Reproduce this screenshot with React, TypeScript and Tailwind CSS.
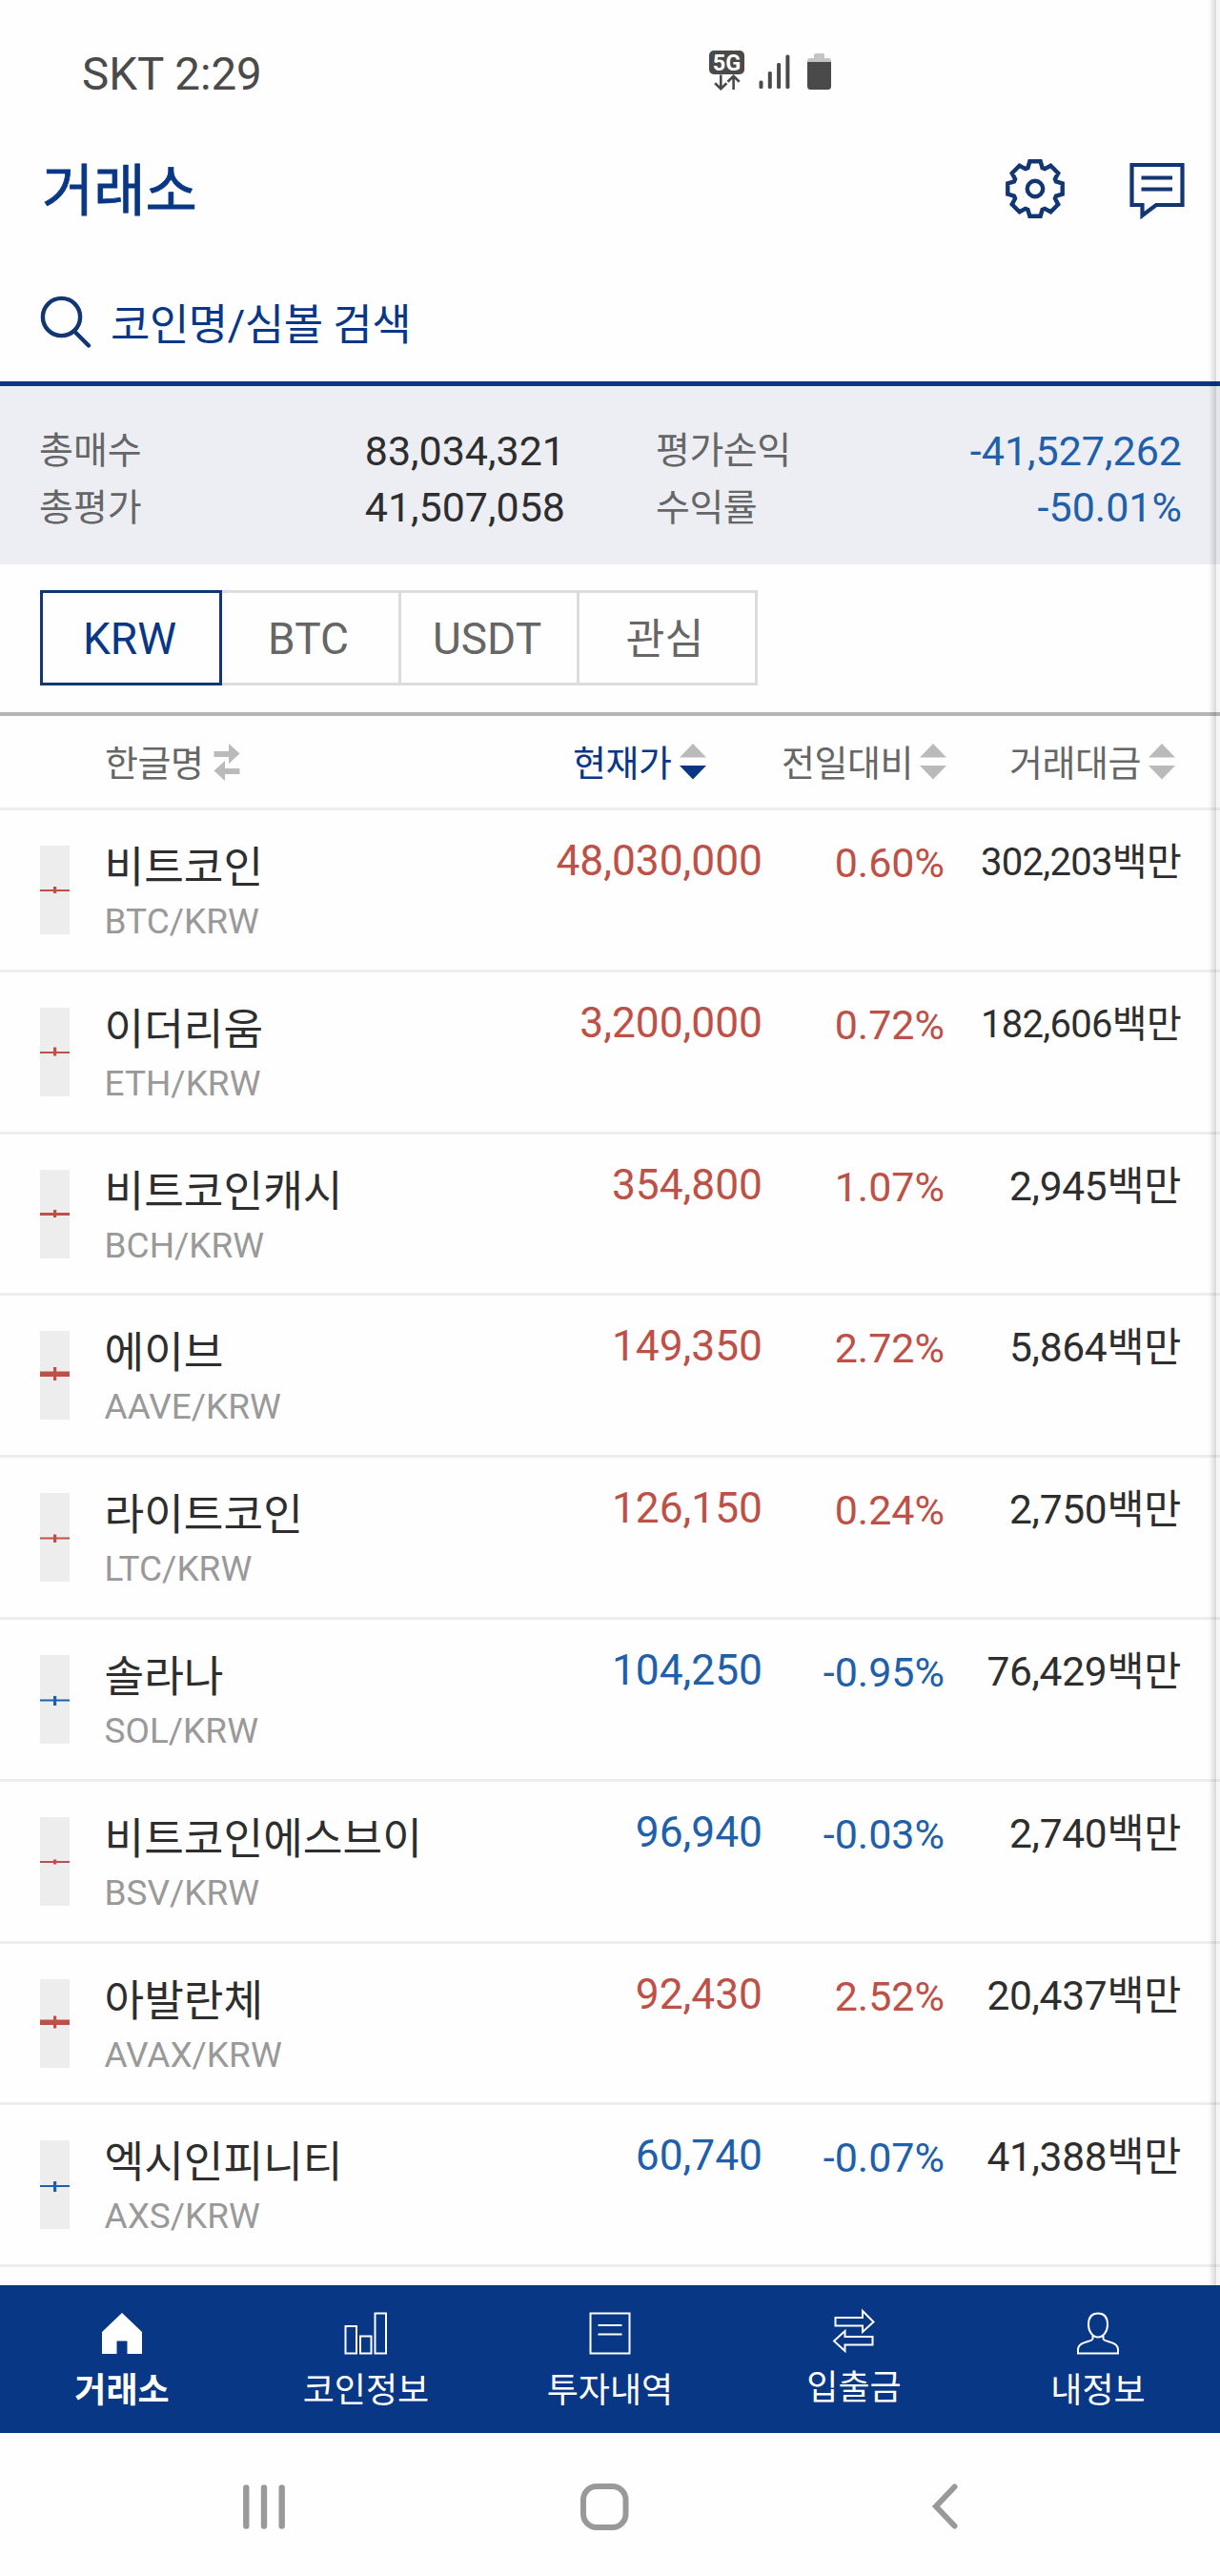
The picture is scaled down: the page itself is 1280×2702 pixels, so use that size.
import type { ReactNode } from "react";

type Coin = {
  name: string;
  pair: string;
  price: string;
  change: string;
  volume: string;
  down?: boolean;
  candle: { color: string; body: [number, number]; wick: [number, number] };
};

const RED = "#bd5148";
const BLUE = "#1f5fa8";

const coins: Coin[] = [
  { name: "비트코인", pair: "BTC/KRW", price: "48,030,000", change: "0.60%", volume: "302,203", candle: { color: RED, body: [46, 48], wick: [43, 50] } },
  { name: "이더리움", pair: "ETH/KRW", price: "3,200,000", change: "0.72%", volume: "182,606", candle: { color: RED, body: [46, 48], wick: [41.5, 50.5] } },
  { name: "비트코인캐시", pair: "BCH/KRW", price: "354,800", change: "1.07%", volume: "2,945", candle: { color: RED, body: [45, 48], wick: [42, 50] } },
  { name: "에이브", pair: "AAVE/KRW", price: "149,350", change: "2.72%", volume: "5,864", candle: { color: RED, body: [42.5, 48], wick: [38, 52] } },
  { name: "라이트코인", pair: "LTC/KRW", price: "126,150", change: "0.24%", volume: "2,750", candle: { color: RED, body: [46.5, 48.5], wick: [43.5, 52] } },
  { name: "솔라나", pair: "SOL/KRW", price: "104,250", change: "-0.95%", volume: "76,429", down: true, candle: { color: BLUE, body: [46.5, 48.5], wick: [43, 53] } },
  { name: "비트코인에스브이", pair: "BSV/KRW", price: "96,940", change: "-0.03%", volume: "2,740", down: true, candle: { color: RED, body: [46, 48], wick: [44.5, 49.5] } },
  { name: "아발란체", pair: "AVAX/KRW", price: "92,430", change: "2.52%", volume: "20,437", candle: { color: RED, body: [42.5, 48], wick: [38.5, 51.5] } },
  { name: "엑시인피니티", pair: "AXS/KRW", price: "60,740", change: "-0.07%", volume: "41,388", down: true, candle: { color: BLUE, body: [47, 49], wick: [43, 54] } },
];

function Candle({ color, body, wick }: Coin["candle"]) {
  return (
    <svg className="block h-[93px] w-[31px] bg-[#ededed]" viewBox="0 0 31 93">
      <rect x="0" y={body[0]} width="31" height={body[1] - body[0]} fill={color} />
      <rect x="14" y={wick[0]} width="3.2" height={wick[1] - wick[0]} fill={color} />
    </svg>
  );
}

function SortArrows({ active = false }: { active?: boolean }) {
  return (
    <svg className="block h-[38px] w-7 shrink-0" viewBox="0 0 28 38">
      <path d="M14 0 28 14.5H0Z" fill="#bababa" />
      <path d="M14 37.5 28 23H0Z" fill={active ? "#083786" : "#bababa"} />
    </svg>
  );
}

function StatusBar() {
  return (
    <header className="flex h-[148px] shrink-0 items-start pl-[86px]">
      <span className="mt-[48px] w-[658px] text-[47.5px] leading-[60px] text-[#4a4a4a]">SKT 2:29</span>
      <div className="mt-[53px] flex w-[37px] flex-col items-center text-[#4a4a4a]">
        <span className="flex h-[25px] w-full items-center justify-center rounded-[5px] bg-[#4a4a4a] pt-[2px] text-[23.5px] leading-none font-bold text-white">
          5G
        </span>
        <svg className="block h-[17px] w-[28px]" viewBox="0 0 28 17" fill="none" stroke="currentColor" strokeWidth="2.6">
          <path d="M7.3 0.5V15M1.2 9.2l6.1 6 6.1-6M20.6 16V2M14.5 7.8l6.1-6 6.1 6" />
        </svg>
      </div>
      <svg className="mt-[57px] ml-[15px] block h-[37px] w-[33px]" viewBox="0 0 33 37" fill="#4a4a4a">
        <rect x="0.5" y="27.5" width="4" height="8.5" rx="1.6" />
        <rect x="9.8" y="18" width="4" height="18" rx="1.6" />
        <rect x="19.1" y="9" width="4" height="27" rx="1.6" />
        <rect x="28.4" y="0.5" width="4" height="35.5" rx="1.6" />
      </svg>
      <svg className="mt-[56px] ml-[18px] block h-[38px] w-[25px]" viewBox="0 0 25 38">
        <path d="M7 2a2 2 0 0 1 2-2h7a2 2 0 0 1 2 2v3h4a3 3 0 0 1 3 3v2H0V8a3 3 0 0 1 3-3h4Z" fill="#c3c3c3" />
        <path d="M0 9h25v25.5a3.5 3.5 0 0 1-3.5 3.5h-18A3.5 3.5 0 0 1 0 34.5Z" fill="#4a4a4a" />
      </svg>
    </header>
  );
}

function GearIcon() {
  const tooth = [
    [-7.6, -22],
    [-5.6, -28.7],
    [5.6, -28.7],
    [7.6, -22],
  ];
  const points: string[] = [];
  for (let i = 0; i < 8; i++) {
    const a = (i * Math.PI) / 4;
    for (const [x, y] of tooth) {
      points.push(`${(x * Math.cos(a) - y * Math.sin(a)).toFixed(2)},${(x * Math.sin(a) + y * Math.cos(a)).toFixed(2)}`);
    }
  }
  return (
    <svg className="block h-[62px] w-[62px]" viewBox="-31 -31 62 62" fill="none" stroke="#123672" strokeWidth="4.4">
      <polygon points={points.join(" ")} />
      <circle r="8.2" />
    </svg>
  );
}

function ChatIcon() {
  return (
    <svg className="block h-[60px] w-[58px]" viewBox="0 0 58 60" fill="none" stroke="#123672" strokeWidth="4.2">
      <path d="M2.5 2H55.500V44H28L13.500 55V44H2.5Z" />
      <path d="M12.500 15.500H45M12.500 27.500H45" />
    </svg>
  );
}

function Summary() {
  const left = [["총매수", "83,034,321"], ["총평가", "41,507,058"]];
  const right = [["평가손익", "-41,527,262"], ["수익률", "-50.01%"]];
  return (
    <section className="flex h-[192px] shrink-0 border-t-[5px] border-[#083786] bg-[#eceef4] pt-[38px] pr-[40px] pl-[41px]">
      <dl className="w-[552px]">
        {left.map(([label, value]) => (
          <div key={label} className="flex h-[59.5px] items-center justify-between">
            <dt className="pt-[2px] text-[39px] leading-[59px] text-[#666]">{label}</dt>
            <dd className="pt-px text-[43px] leading-[59px] text-[#2e2e2e]">{value}</dd>
          </div>
        ))}
      </dl>
      <dl className="ml-[95px] flex-1">
        {right.map(([label, value]) => (
          <div key={label} className="flex h-[59.5px] items-center justify-between">
            <dt className="pt-[2px] text-[39px] leading-[59px] tracking-[-0.5px] text-[#666]">{label}</dt>
            <dd className="pt-px text-[43px] leading-[59px] text-[#2060ab]">{value}</dd>
          </div>
        ))}
      </dl>
    </section>
  );
}

function MarketTabs() {
  return (
    <div className="flex h-[155px] shrink-0 pt-[27px] pl-[42px] text-[46px] leading-none text-[#666]">
      <button className="flex h-[100px] w-[191px] items-center justify-center border-[3px] border-[#123672] pt-[2px] pr-[3px] text-[#083786]">KRW</button>
      <button className="flex h-[100px] w-[188px] items-center justify-center border-y-[3px] border-r-[3px] border-[#dcdcdc] pt-[2px] pr-[4px]">BTC</button>
      <button className="flex h-[100px] w-[187px] items-center justify-center border-y-[3px] border-r-[3px] border-[#dcdcdc] pt-[2px] pr-[4px]">USDT</button>
      <button className="flex h-[100px] w-[187px] items-center justify-center border-y-[3px] border-r-[3px] border-[#dcdcdc] pt-[5px] pr-[5px] text-[44.5px]">관심</button>
    </div>
  );
}

function ListHeader() {
  return (
    <div className="flex h-[103px] shrink-0 items-center border-t-[4px] border-b-[3px] border-t-[#b6b6b6] border-b-[#ededed] pl-[110px] text-[38px] leading-[60px] tracking-[-0.5px] text-[#666]">
      <div className="flex w-[491px] items-center">
        <span className="w-[114px] pt-[3px]">한글명</span>
        <svg className="block h-[39px] w-[28px]" viewBox="0 0 28 39" fill="#bababa">
          <path d="M0.5 8H16V0L27.5 10.5 16 21V14H0.5ZM27.5 26H12V18L0.5 28.5 12 39V32H27.5Z" />
        </svg>
      </div>
      <div className="flex w-[219px] items-center text-[#083786]">
        <span className="w-[112px] pt-[3px]">현재가</span>
        <SortArrows active />
      </div>
      <div className="flex w-[239px] items-center">
        <span className="w-[145px] pt-[3px]">전일대비</span>
        <SortArrows />
      </div>
      <div className="flex items-center">
        <span className="w-[146px] pt-[3px]">거래대금</span>
        <SortArrows />
      </div>
    </div>
  );
}

function CoinRow({ coin }: { coin: Coin }) {
  const color = coin.down ? "text-[#2060ab]" : "text-[#bd5148]";
  const compact = coin.volume.length > 6;
  return (
    <li className="flex h-[169.8px] items-start border-b-[3px] border-[#ededed] pl-[42px]">
      <div className="mt-[37px]">
        <Candle {...coin.candle} />
      </div>
      <div className="mt-[33px] ml-[36.5px] w-[391.5px] whitespace-nowrap">
        <div className="text-[45.3px] leading-[56px] text-[#2e2e2e]">{coin.name}</div>
        <div className="text-[37px] leading-[56px] text-[#999]">{coin.pair}</div>
      </div>
      <div className={"mt-[27px] w-[299px] text-right text-[44.3px] leading-[52px] " + color}>{coin.price}</div>
      <div className={"mt-[29px] w-[191px] text-right text-[43px] leading-[52px] " + color}>{coin.change}</div>
      <div
        className={
          compact
            ? "mt-[29px] w-[248px] text-right text-[40px] leading-[52px] tracking-[-0.7px] whitespace-nowrap text-[#2e2e2e]"
            : "mt-[29px] w-[248px] text-right text-[42.5px] leading-[52px] tracking-[-0.3px] whitespace-nowrap text-[#2e2e2e]"
        }
      >
        {coin.volume}백만
      </div>
    </li>
  );
}

function NavItem({ label, active, raised, children }: { label: string; active?: boolean; raised?: boolean; children: ReactNode }) {
  return (
    <button className={"flex w-[256px] flex-col items-center text-white " + (raised ? "pt-[23px]" : "pt-[26px]")}>
      <svg className="block h-[48px] w-[48px]" viewBox="0 0 48 48" fill="none" stroke="currentColor" strokeWidth="2">
        {children}
      </svg>
      <span className={"mt-[12px] text-[36px] leading-[50px] " + (active ? "font-bold" : "font-normal")}>{label}</span>
    </button>
  );
}

function BottomNav() {
  return (
    <nav className="flex h-[155px] shrink-0 bg-[#083786]">
      <NavItem label="거래소" active>
        <path d="M24 3 45 23V46H29.500V32.500H18.500V46H3V23Z" fill="currentColor" stroke="none" />
      </NavItem>
      <NavItem label="코인정보">
        <path d="M2.500 17H14V45.500H2.500ZM18 27.500H29.500V45.500H18ZM33.500 3.500H45V45.500H33.500Z" />
      </NavItem>
      <NavItem label="투자내역">
        <path d="M3.500 3.500H44.500V45.500H3.500ZM11.500 16H36.500M11.500 25.500H36.500" />
      </NavItem>
      <NavItem label="입출금" raised>
        <path d="M4.500 11V19.500H33V26L44.500 15.500 33 4V11ZM43.500 31V39.500H14.500V46L3 35.500 14.500 25V31Z" />
      </NavItem>
      <NavItem label="내정보">
        <path d="M24 3.500C17 3.500 14 8.500 14 15.500 14 22.500 18.500 28.500 24 28.500S34 22.500 34 15.500C34 8.500 31 3.500 24 3.500ZM18.500 26.500V30C18.500 34 3 32 3 42V45.500H45V42C45 32 29.500 34 29.500 30V26.500" />
      </NavItem>
    </nav>
  );
}

function SystemNav() {
  return (
    <footer className="flex flex-1 items-start pt-[52px] pl-[254px] text-[#999]">
      <svg className="block h-[50px] w-[48px]" viewBox="0 0 48 50" stroke="currentColor" strokeWidth="6.4" strokeLinecap="round">
        <path d="M4.300 5.500V45.500M23 5.500V45.500M41.700 5.500V45.500" />
      </svg>
      <svg className="ml-[306px] block h-[50px] w-[52px]" viewBox="0 0 52 50" fill="none" stroke="currentColor" strokeWidth="6">
        <rect x="4" y="4" width="44.5" height="43" rx="14" />
      </svg>
      <svg className="ml-[316px] block h-[50px] w-[30px]" viewBox="0 0 30 50" fill="none" stroke="currentColor" strokeWidth="6" strokeLinecap="round">
        <path d="M25.500 4.500 6 25 25.500 45.500" />
      </svg>
    </footer>
  );
}

export default function App() {
  return (
    <div className="relative flex h-[2702px] w-[1280px] flex-col overflow-hidden bg-[#fefefe] [font-family:Roboto,'Noto_Sans_CJK_KR',sans-serif]">
      <StatusBar />
      <div className="flex h-[152px] shrink-0 items-start pr-[37px] pl-[44px]">
        <h1 className="mt-[18px] flex-1 text-[59px] leading-[70px] font-normal text-[#083786] [-webkit-text-stroke:0.8px_#083786]">거래소</h1>
        <div className="mt-[19px] mr-[68px]">
          <GearIcon />
        </div>
        <div className="mt-[23px]">
          <ChatIcon />
        </div>
      </div>
      <div className="flex h-[100px] shrink-0 items-start pl-[41px] text-[#083786]">
        <svg className="mt-[10px] block h-[56px] w-[58px]" viewBox="0 0 58 56" fill="none" stroke="#123672" strokeWidth="4.4">
          <circle cx="23.5" cy="22.5" r="19.6" />
          <path d="M36.500 37 52 52.500" strokeLinecap="round" />
        </svg>
        <span className="mt-[12px] ml-[17px] text-[45px] leading-[60px] tracking-[-0.5px]">코인명/심볼 검색</span>
      </div>
      <Summary />
      <MarketTabs />
      <ListHeader />
      <ul className="h-[1547px] shrink-0 overflow-hidden">
        {coins.map((coin) => (
          <CoinRow key={coin.pair} coin={coin} />
        ))}
      </ul>
      <BottomNav />
      <SystemNav />
      <div className="pointer-events-none absolute top-0 right-0 flex h-[2397px] w-[12px]">
        <div className="w-[8px] bg-linear-to-r from-black/0 to-black/15" />
        <div className="w-[4px] bg-black/3" />
      </div>
    </div>
  );
}
